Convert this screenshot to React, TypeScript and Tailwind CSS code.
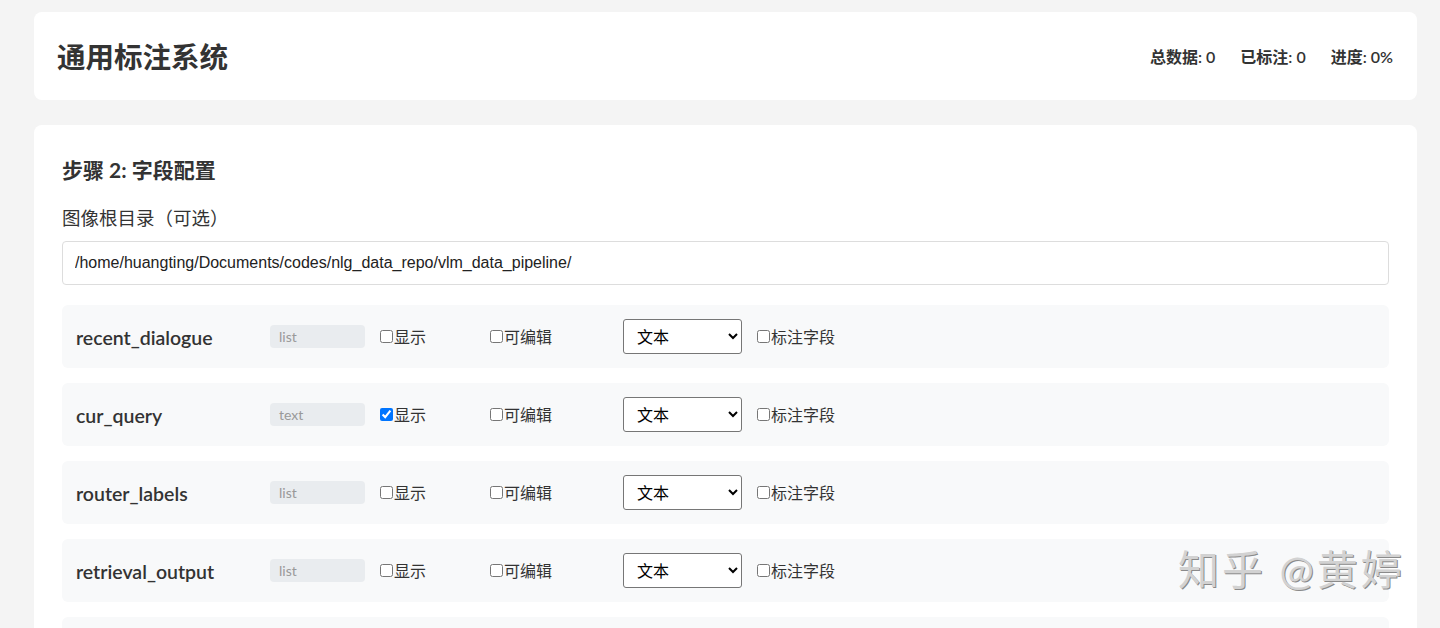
import React, { useState } from 'react';

interface FieldConfig {
  name: string;
  type: string;
  show: boolean;
  editable: boolean;
  widget: string;
  label: boolean;
}

const initialFields: FieldConfig[] = [
  { name: 'recent_dialogue', type: 'list', show: false, editable: false, widget: 'text', label: false },
  { name: 'cur_query', type: 'text', show: true, editable: false, widget: 'text', label: false },
  { name: 'router_labels', type: 'list', show: false, editable: false, widget: 'text', label: false },
  { name: 'retrieval_output', type: 'list', show: false, editable: false, widget: 'text', label: false },
  { name: 'image_path', type: 'text', show: false, editable: false, widget: 'text', label: false },
];

const fontStack = "font-['Lato','Noto_Sans_CJK_SC',sans-serif]";

const App: React.FC = () => {
  const [fields, setFields] = useState<FieldConfig[]>(initialFields);
  const [imageRoot, setImageRoot] = useState('/home/huangting/Documents/codes/nlg_data_repo/vlm_data_pipeline/');

  const toggle = (idx: number, key: 'show' | 'editable' | 'label') => {
    setFields((prev) => prev.map((f, i) => (i === idx ? { ...f, [key]: !f[key] } : f)));
  };

  const setWidget = (idx: number, value: string) => {
    setFields((prev) => prev.map((f, i) => (i === idx ? { ...f, widget: value } : f)));
  };

  return (
    <div className={`relative min-h-screen bg-[#f4f4f4] pt-3 pl-[34px] pr-[23px] pb-6 text-[#333] ${fontStack}`}>
      <div className="flex h-[88px] items-center justify-between rounded-lg bg-white pl-[23px] pr-6">
        <h1 className="mt-[3px] text-[28.5px] font-bold text-[#333]">通用标注系统</h1>
        <div className="mt-px flex gap-[25px] text-base font-semibold text-[#333]">
          <span>总数据: 0</span>
          <span>已标注: 0</span>
          <span>进度: 0%</span>
        </div>
      </div>

      <div className="mt-[25px] rounded-lg bg-white px-[28px] pt-[30px] pb-8">
        <h2 className="mb-[19px] text-[21px] leading-[30px] font-bold text-[#333]">步骤 2: 字段配置</h2>
        <label className="mb-[10px] block pt-[2px] text-[18.5px] leading-[25px] text-[#333]">图像根目录（可选）</label>
        <input
          value={imageRoot}
          onChange={(e) => setImageRoot(e.target.value)}
          className="mb-5 block h-[44px] w-full rounded border border-[#ddd] bg-white px-3 font-['Liberation_Sans',sans-serif] text-base text-[#222] outline-none"
        />

        <div className="flex flex-col gap-[15px]">
          {fields.map((field, idx) => (
            <div key={field.name} className="flex h-[63px] items-center rounded-md bg-[#f8f9fa] pl-[14px]">
              <div className="w-[194px] pt-[3px] text-[19.5px] font-semibold text-[#333]">{field.name}</div>
              <div className="mr-[15px] flex h-[23px] w-[95px] items-center rounded bg-[#e9ecef] pl-[9px] text-sm text-[#999]">
                {field.type}
              </div>
              <label className="flex w-[110px] items-center text-base text-[#333]">
                <input
                  type="checkbox"
                  checked={field.show}
                  onChange={() => toggle(idx, 'show')}
                  className="m-0 mr-px h-[13px] w-[13px]"
                />
                显示
              </label>
              <label className="flex w-[133px] items-center text-base text-[#333]">
                <input
                  type="checkbox"
                  checked={field.editable}
                  onChange={() => toggle(idx, 'editable')}
                  className="m-0 mr-px h-[13px] w-[13px]"
                />
                可编辑
              </label>
              <select
                value={field.widget}
                onChange={(e) => setWidget(idx, e.target.value)}
                className="mr-[15px] h-[35px] w-[119px] rounded-[3px] border border-[#767676] bg-white pl-[9px] text-base text-black"
              >
                <option value="text">文本</option>
                <option value="image">图片</option>
                <option value="json">JSON</option>
              </select>
              <label className="flex items-center text-base text-[#333]">
                <input
                  type="checkbox"
                  checked={field.label}
                  onChange={() => toggle(idx, 'label')}
                  className="m-0 mr-px h-[13px] w-[13px]"
                />
                标注字段
              </label>
            </div>
          ))}
        </div>
      </div>

      <div className="pointer-events-none absolute top-[541px] left-[1178px] text-[41px] leading-[58px] tracking-[3px] text-[#d2d2d2] [text-shadow:1px_1px_0_#8a8a8a]">
        知乎 @黄婷
      </div>
    </div>
  );
};

export default App;
